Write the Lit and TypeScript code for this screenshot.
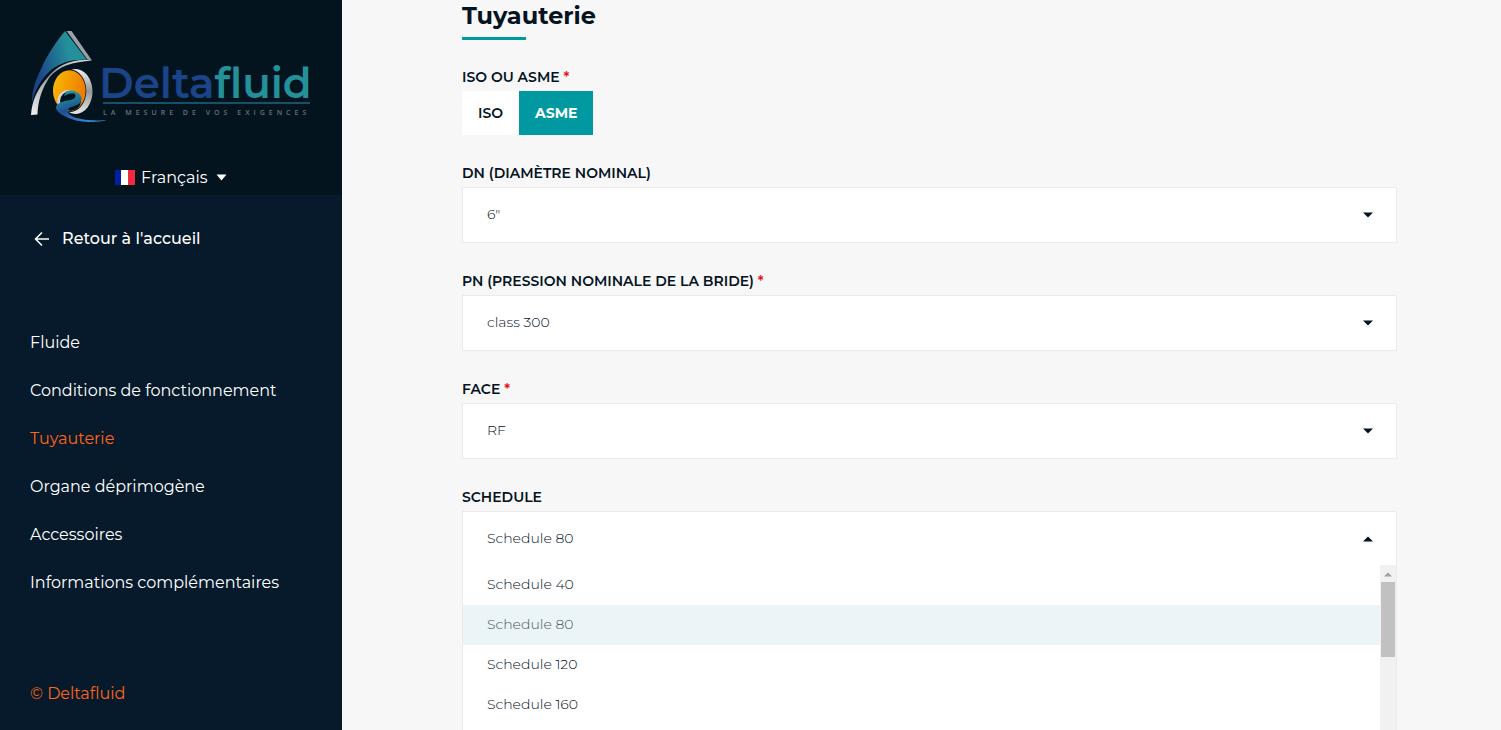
import { LitElement, html, css, svg } from "lit";
import { customElement, property, state } from "lit/decorators.js";
import { classMap } from "lit/directives/class-map.js";

const FONT = css`Montserrat, Inter, "Open Sans", sans-serif`;

@customElement("brand-logo")
class BrandLogo extends LitElement {
  static styles = css`
    :host { display: block; }
    svg { display: block; width: 281px; height: 94px; overflow: visible; }
    .word { font: 600 42px ${FONT}; }
    .tag { font: 600 7px "Open Sans", sans-serif; letter-spacing: 4px; }
  `;
  render() {
    return html`<svg viewBox="0 0 281 94" role="img" aria-label="Deltafluid">
      <defs>
        <linearGradient id="roof" x1="0" y1="0.6" x2="1" y2="0.3">
          <stop offset="0.1" stop-color="#1b4489" /><stop offset="0.7" stop-color="#23909a" />
        </linearGradient>
        <linearGradient id="silver" x1="0" y1="1" x2="1" y2="0">
          <stop offset="0" stop-color="#f1f1f1" /><stop offset="0.5" stop-color="#999ca0" /><stop offset="1" stop-color="#e0e0e0" />
        </linearGradient>
        <linearGradient id="ring" x1="0" y1="0" x2="0" y2="1">
          <stop offset="0" stop-color="#f2f2f2" /><stop offset="0.5" stop-color="#95979a" /><stop offset="1" stop-color="#e8e8e8" />
        </linearGradient>
        <linearGradient id="sun" x1="0" y1="0" x2="1" y2="0.3">
          <stop offset="0.1" stop-color="#fbb500" /><stop offset="1" stop-color="#ee7d00" />
        </linearGradient>
        <linearGradient id="wave" x1="0" y1="0" x2="0.5" y2="1">
          <stop offset="0.2" stop-color="#23909a" /><stop offset="0.6" stop-color="#1d5092" /><stop offset="1" stop-color="#3186d0" />
        </linearGradient>
      </defs>
      <path fill="url(#roof)" d="M35 1 L57 30 C44 29 31 32 21 40 C10 50 5 60 2 73 C2 60 6 49 11 39 C17 25 26 12 35 1Z" />
      <path fill="url(#silver)" d="M36.500 1 L41.500 1 L62 30.500 L57.500 29.500Z" />
      <path fill="url(#silver)" d="M62 30.500 C42 28 27 36 18 47 C8 58 2 70 1 85 L7.500 84.500 C8 70 12 59 19 48 C28 36 43 32 62 30.500Z" />
      <ellipse cx="45.500" cy="61.500" rx="17" ry="22.500" fill="url(#ring)" />
      <ellipse cx="39.300" cy="60.700" rx="17" ry="21.500" fill="#03141f" />
      <ellipse cx="39.300" cy="60.700" rx="16.300" ry="20.500" fill="url(#sun)" />
      <ellipse cx="38.500" cy="70.500" rx="11" ry="10.500" fill="#d5d5d5" />
      <ellipse cx="40.500" cy="71" rx="10.500" ry="10" fill="#03141f" />
      <path fill="url(#wave)" d="M42 60.500 C50 62 54 68 50 73 C46 77 38 76 37.500 81 C39 89 58 91 77 90.300 C66 93 49 92.500 40 88.500 C31 85 23 80 27 75 C32 69 45 72 45.500 66 C45.500 63 42 62 34 66 C35 62 38 60 42 60.500Z" />
      <text class="word" x="69" y="68"><tspan fill="#1b4489">Delta</tspan><tspan fill="#23909a">fluid</tspan></text>
      <rect x="73" y="72" width="207" height="2" fill="#175067" />
      <text class="tag" x="73" y="85" fill="#6c7075">LA MESURE DE VOS EXIGENCES</text>
    </svg>`;
  }
}

@customElement("side-bar")
class SideBar extends LitElement {
  @property() active = "";
  static styles = css`
    :host {
      display: flex; flex-direction: column; box-sizing: border-box;
      background: #061a2b; color: #fff; font: 400 16px/24px ${FONT};
    }
    header { background: #03141f; padding: 30px 30px 5px; }
    .lang { display: flex; justify-content: center; align-items: center; gap: 6px; margin-top: 40px; }
    select {
      appearance: none; border: 0; padding: 2px 0 0; margin: 0; background: none;
      color: inherit; font: inherit; line-height: 24px;
    }
    .caret { margin-left: 2px; }
    svg { display: block; flex: none; }
    a { color: inherit; text-decoration: none; }
    .back { display: flex; align-items: center; gap: 12px; padding: 32px 34px 0; font-weight: 500; }
    nav { display: flex; flex-direction: column; gap: 24px; padding: 80px 30px 24px; }
    .current, footer { color: #ff6418; }
    footer { margin-top: auto; padding: 0 30px 24px; }
  `;
  private links = ["Fluide", "Conditions de fonctionnement", "Tuyauterie", "Organe déprimogène", "Accessoires", "Informations complémentaires"];
  render() {
    return html`
      <header>
        <brand-logo></brand-logo>
        <div class="lang">
          <svg width="20" height="15" viewBox="0 0 20 15" aria-hidden="true">
            <rect width="20" height="15" fill="#fff" /><rect width="6" height="15" fill="#00209f" /><rect x="13" width="7" height="15" fill="#f42a41" />
          </svg>
          <select aria-label="Langue"><option>Français</option></select>
          <svg class="caret" width="11" height="7" viewBox="0 0 11 7" aria-hidden="true"><path d="M0.500 0.500H10.500L5.500 6.500Z" fill="#fff" /></svg>
        </div>
      </header>
      <a class="back" href="#">
        <svg width="16" height="16" viewBox="0 0 16 16" fill="none" stroke="#fff" stroke-width="1.500" aria-hidden="true"><path d="M15 8H1.500M8 1.500L1.500 8L8 14.500" /></svg>
        Retour à l'accueil
      </a>
      <nav>
        ${this.links.map((l) => html`<a href="#" class=${classMap({ current: l === this.active })}>${l}</a>`)}
      </nav>
      <footer><a href="#">© Deltafluid</a></footer>
    `;
  }
}

@customElement("select-field")
class SelectField extends LitElement {
  @property() label = "";
  @property() value = "";
  @property({ type: Boolean }) required = false;
  @property({ type: Boolean }) open = false;
  @property({ attribute: false }) options: string[] = [];
  static styles = css`
    :host { display: block; color: #04131f; font: 400 14px/20px ${FONT}; }
    label { display: block; font-weight: 600; text-transform: uppercase; margin-bottom: 4px; }
    .star { color: #e3111b; }
    .box { position: relative; }
    select {
      display: block; appearance: none; box-sizing: border-box; width: 100%; height: 56px; margin: 0;
      padding: 0 48px 2px 24px; border: 1px solid #ebebeb; border-radius: 0; background: #fff;
      color: #04131f; font: inherit; font-weight: 300; outline: none;
    }
    .caret { position: absolute; right: 24px; top: 25px; pointer-events: none; }
    .menu {
      position: absolute; top: 54px; left: 0; right: 0; display: flex; min-height: 200px;
      border: 1px solid #ebebeb; border-top: 0; background: #fff;
    }
    ul { flex: 1; margin: 0; padding: 0; list-style: none; font-weight: 300; color: #04131f; }
    li { padding: 9px 24px 11px; }
    .selected { background: #ebf4f6; color: #4a575f; }
    .track { width: 16px; background: #f1f1f1; display: flex; flex-direction: column; align-items: center; }
    .up { margin: 7px 0 5px; }
    .thumb { width: 14px; height: 75px; background: #c1c1c1; }
  `;
  render() {
    return html`
      <label for="s">${this.label}${this.required ? html` <span class="star">*</span>` : ""}</label>
      <div class="box">
        <select id="s">
          ${(this.options.length ? this.options : [this.value]).map((o) => html`<option ?selected=${o === this.value}>${o}</option>`)}
        </select>
        <svg class="caret" width="10" height="6" viewBox="0 0 10 6" aria-hidden="true">
          ${this.open ? svg`<path d="M0 5.500H10L5 0.500Z" fill="#04131f" />` : svg`<path d="M0 0.500H10L5 5.500Z" fill="#04131f" />`}
        </svg>
        ${this.open ? html`<div class="menu">
          <ul role="listbox" aria-label=${this.label}>
            ${this.options.map((o) => html`<li role="option" aria-selected=${o === this.value} class=${classMap({ selected: o === this.value })}>${o}</li>`)}
          </ul>
          <div class="track" aria-hidden="true">
            <svg class="up" width="8" height="5" viewBox="0 0 8 5"><path d="M0 4.500H8L4 0.500Z" fill="#a0a0a0" /></svg>
            <div class="thumb"></div>
          </div>
        </div>` : ""}
      </div>
    `;
  }
}

@customElement("app-root")
class AppRoot extends LitElement {
  @state() private norm = "ASME";
  static styles = css`
    :host {
      display: grid; grid-template-columns: 342px minmax(0, 1fr); height: 100vh; overflow: hidden;
      background: #f7f7f7; color: #04131f; font: 400 14px/20px ${FONT};
    }
    main { padding: 0 104px 0 120px; overflow: hidden; }
    h1 { margin: 0; font-size: 24px; line-height: 32px; font-weight: 700; }
    .rule { width: 64px; height: 3px; margin-top: 5px; background: #0099a1; }
    form { display: flex; flex-direction: column; gap: 28px; padding-top: 27px; }
    .caption { font-weight: 600; margin-bottom: 4px; }
    .star { color: #e3111b; }
    .toggle { display: flex; }
    .toggle button {
      border: 0; margin: 0; padding: 12px 16px; background: #fff; color: #04131f;
      font: inherit; font-weight: 600;
    }
    .toggle .on { background: #0099a1; color: #fff; font-weight: 700; }
  `;
  render() {
    return html`
      <side-bar active="Tuyauterie"></side-bar>
      <main>
        <h1>Tuyauterie</h1>
        <div class="rule"></div>
        <form>
          <div role="group" aria-labelledby="norm">
            <div class="caption" id="norm">ISO OU ASME <span class="star">*</span></div>
            <div class="toggle">
              ${["ISO", "ASME"].map((n) => html`<button type="button" class=${classMap({ on: n === this.norm })} aria-pressed=${n === this.norm} @click=${() => (this.norm = n)}>${n}</button>`)}
            </div>
          </div>
          <select-field label="DN (Diamètre nominal)" value='6"'></select-field>
          <select-field label="PN (Pression nominale de la bride)" value="class 300" required></select-field>
          <select-field label="Face" value="RF" required></select-field>
          <select-field label="Schedule" value="Schedule 80" open
            .options=${["Schedule 40", "Schedule 80", "Schedule 120", "Schedule 160"]}></select-field>
        </form>
      </main>
    `;
  }
}
